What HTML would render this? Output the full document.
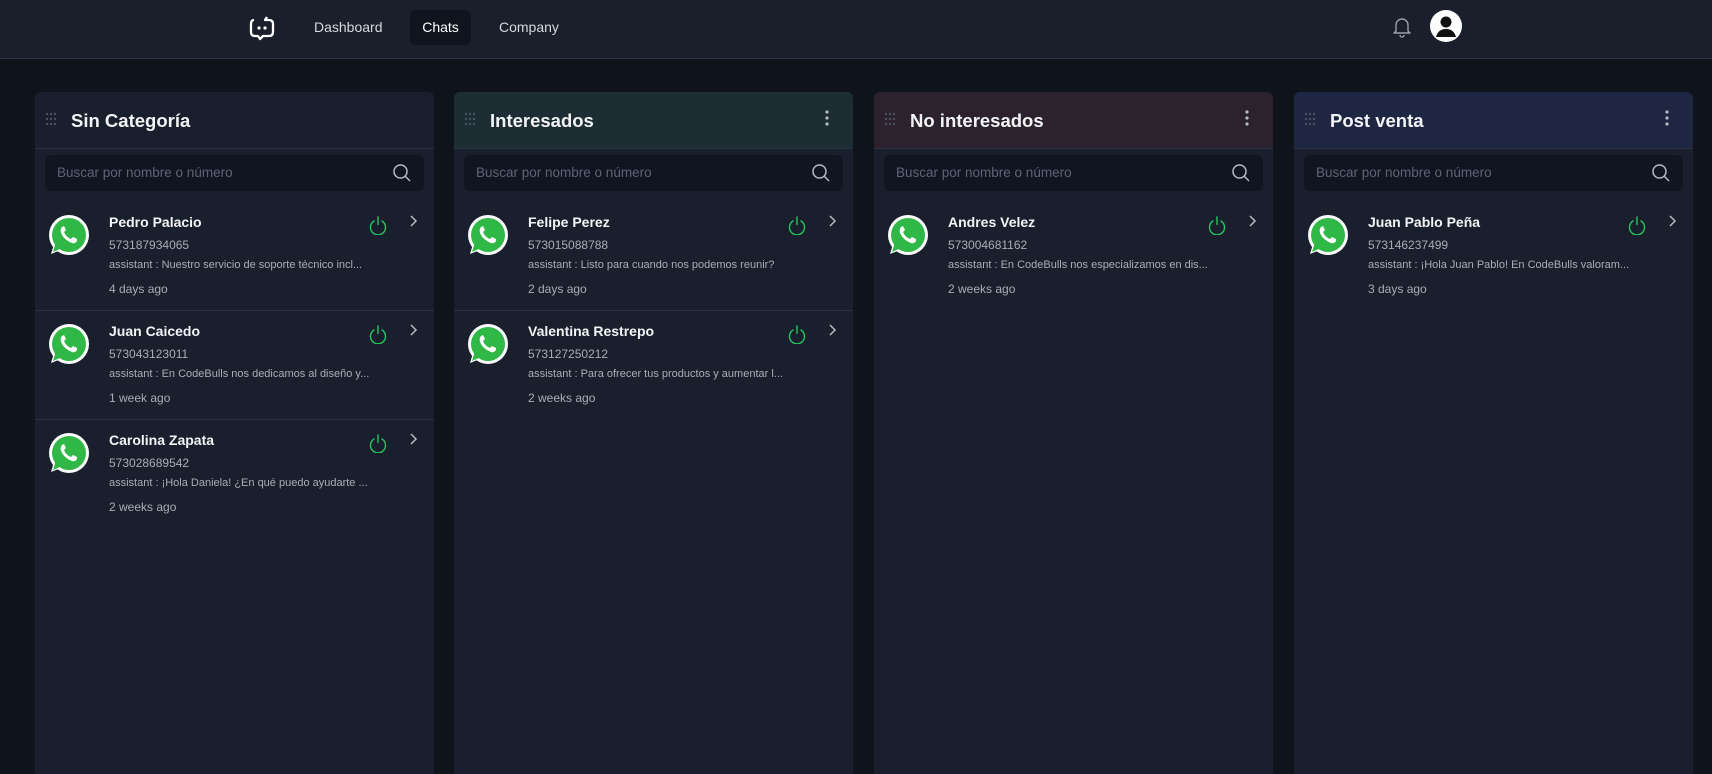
<!DOCTYPE html>
<html><head><meta charset="utf-8"><style>
*{box-sizing:border-box;margin:0;padding:0}
html,body{width:1712px;height:774px;overflow:hidden}
body{background:#0f131c;font-family:"Liberation Sans",sans-serif;color:#fff;position:relative}
.top{position:absolute;left:0;top:0;width:1712px;height:59px;background:#1a1f2b;border-bottom:1px solid #2c3240}
.nav{position:absolute;top:10px;height:35px;line-height:35px;font-size:14px;color:#d6d9de}
.col{position:absolute;top:92px;width:399px;height:682px;background:#1a1f2d;border-radius:6px 6px 0 0;overflow:hidden}
.hd{height:57px;border-bottom:1px solid #2c3342;position:relative}
.hd .t{position:absolute;left:36px;top:18px;font-size:18.5px;font-weight:bold;color:#f3f4f6}
.grip{position:absolute;left:10px;top:20px}
.dots{position:absolute;right:24px;top:18px}
.search{position:absolute;left:10px;top:63px;right:10px;height:36px;background:#111522;border-radius:6px;font-size:13.5px;color:#5d6475;line-height:36px;padding-left:12px}
.search svg{position:absolute;right:12px;top:8px}
.item{position:absolute;left:0;width:399px;height:109px;border-bottom:1px solid #2c3342}
.wa{position:absolute;left:12px;top:12px}
.nm{position:absolute;left:74px;top:12px;font-size:14px;font-weight:bold;color:#f3f4f6}
.ph{position:absolute;left:74px;top:36px;font-size:12px;color:#a8adb7}
.ms{position:absolute;left:74px;top:57px;font-size:11px;color:#a8adb7;white-space:nowrap}
.tm{position:absolute;left:74px;top:80px;font-size:12px;color:#a8adb7}
.pw{position:absolute;left:333px;top:13px}
.ch{position:absolute;left:374px;top:12px}
</style></head><body>
<div class="top">
<svg style="position:absolute;left:248px;top:14px" width="28" height="28" viewBox="0 0 28 28"><path d="M6 6 Q3 6 3 10 V18 Q3 22 7 22 H10 L12 25 L15 22 H21 Q25 22 25 18 V10 Q25 6 21 6 H17 L19 3" fill="none" stroke="#fff" stroke-width="2.3" stroke-linejoin="round"/><circle cx="11" cy="14" r="1.6" fill="#fff"/><circle cx="17" cy="14" r="1.6" fill="#fff"/></svg>
<div class="nav" style="left:314px">Dashboard</div>
<div class="nav" style="left:410px;width:61px;background:#10141e;border-radius:6px;text-align:center;color:#fff">Chats</div>
<div class="nav" style="left:499px">Company</div>
<svg style="position:absolute;left:1392px;top:16px" width="20" height="22" viewBox="0 0 20 22"><path d="M4 15 V9 A6 6 0 0 1 16 9 V15 L18 17 H2 Z M8 19 A2 2 0 0 0 12 19" fill="none" stroke="#9aa0ab" stroke-width="1.4" stroke-linejoin="round"/></svg>
<svg style="position:absolute;left:1430px;top:10px" width="32" height="32" viewBox="0 0 32 32"><circle cx="16" cy="16" r="16" fill="#fff"/><circle cx="16" cy="12" r="5.5" fill="#111"/><path d="M6 27 Q8 19 16 19 Q24 19 26 27 Z" fill="#111"/></svg>
</div>

<svg width="0" height="0" style="position:absolute"><defs>
<g id="wa"><circle cx="22" cy="21" r="20" fill="#fff"/><path d="M4 40 L7 30 A18 18 0 1 1 14 36 Z" fill="#fff"/><circle cx="22" cy="21" r="17" fill="#2fb845"/><path d="M6 38 L8.5 30 L14 34.5 Z" fill="#2fb845"/><path d="M15 13 Q13 15 14 19 Q17 26 25 29 Q28 30 30 27 L30 25 L26 23 L24 25 Q19 23 17 18 L19 16 L17 12 Z" fill="#fff"/></g>
<g id="pw"><path d="M6 6 A7.5 7.5 0 1 0 14 6" fill="none" stroke="#22c55e" stroke-width="1.4" stroke-linecap="round"/><path d="M10 2 V9.5" stroke="#22c55e" stroke-width="1.4" stroke-linecap="round"/></g>
<g id="gr" fill="#4a5162"><circle cx="2" cy="2" r="1.2"/><circle cx="6" cy="2" r="1.2"/><circle cx="10" cy="2" r="1.2"/><circle cx="2" cy="7" r="1.2"/><circle cx="6" cy="7" r="1.2"/><circle cx="10" cy="7" r="1.2"/><circle cx="2" cy="12" r="1.2"/><circle cx="6" cy="12" r="1.2"/><circle cx="10" cy="12" r="1.2"/></g>
</defs></svg>

<div class="col" style="left:35px">
<div class="hd"><svg class="grip" width="12" height="14"><use href="#gr"/></svg><div class="t">Sin Categoría</div></div>
<div class="search">Buscar por nombre o número<svg width="20" height="20" viewBox="0 0 20 20"><circle cx="8.5" cy="8.5" r="6.5" fill="none" stroke="#b5bac3" stroke-width="1.5"/><path d="M13.5 13.5 L18 18" stroke="#b5bac3" stroke-width="1.5"/></svg></div>
<div class="item" style="top:110px"><svg class="wa" width="44" height="44"><use href="#wa"/></svg><div class="nm">Pedro Palacio</div><div class="ph">573187934065</div><div class="ms">assistant : Nuestro servicio de soporte técnico incl...</div><div class="tm">4 days ago</div><svg class="pw" width="20" height="20"><use href="#pw"/></svg><svg class="ch" width="10" height="14"><path d="M2 2 L7 7 L2 12" fill="none" stroke="#b5bac3" stroke-width="1.5"/></svg></div>
<div class="item" style="top:219px"><svg class="wa" width="44" height="44"><use href="#wa"/></svg><div class="nm">Juan Caicedo</div><div class="ph">573043123011</div><div class="ms">assistant : En CodeBulls nos dedicamos al diseño y...</div><div class="tm">1 week ago</div><svg class="pw" width="20" height="20"><use href="#pw"/></svg><svg class="ch" width="10" height="14"><path d="M2 2 L7 7 L2 12" fill="none" stroke="#b5bac3" stroke-width="1.5"/></svg></div>
<div class="item" style="top:328px;border:none"><svg class="wa" width="44" height="44"><use href="#wa"/></svg><div class="nm">Carolina Zapata</div><div class="ph">573028689542</div><div class="ms">assistant : ¡Hola Daniela! ¿En qué puedo ayudarte ...</div><div class="tm">2 weeks ago</div><svg class="pw" width="20" height="20"><use href="#pw"/></svg><svg class="ch" width="10" height="14"><path d="M2 2 L7 7 L2 12" fill="none" stroke="#b5bac3" stroke-width="1.5"/></svg></div>
</div>

<div class="col" style="left:454px">
<div class="hd" style="background:#1c2d33"><svg class="grip" width="12" height="14"><use href="#gr"/></svg><div class="t">Interesados</div><svg class="dots" width="4" height="16"><circle cx="2" cy="2" r="1.6" fill="#b5bac3"/><circle cx="2" cy="8" r="1.6" fill="#b5bac3"/><circle cx="2" cy="14" r="1.6" fill="#b5bac3"/></svg></div>
<div class="search">Buscar por nombre o número<svg width="20" height="20" viewBox="0 0 20 20"><circle cx="8.5" cy="8.5" r="6.5" fill="none" stroke="#b5bac3" stroke-width="1.5"/><path d="M13.5 13.5 L18 18" stroke="#b5bac3" stroke-width="1.5"/></svg></div>
<div class="item" style="top:110px"><svg class="wa" width="44" height="44"><use href="#wa"/></svg><div class="nm">Felipe Perez</div><div class="ph">573015088788</div><div class="ms">assistant : Listo para cuando nos podemos reunir?</div><div class="tm">2 days ago</div><svg class="pw" width="20" height="20"><use href="#pw"/></svg><svg class="ch" width="10" height="14"><path d="M2 2 L7 7 L2 12" fill="none" stroke="#b5bac3" stroke-width="1.5"/></svg></div>
<div class="item" style="top:219px;border:none"><svg class="wa" width="44" height="44"><use href="#wa"/></svg><div class="nm">Valentina Restrepo</div><div class="ph">573127250212</div><div class="ms">assistant : Para ofrecer tus productos y aumentar l...</div><div class="tm">2 weeks ago</div><svg class="pw" width="20" height="20"><use href="#pw"/></svg><svg class="ch" width="10" height="14"><path d="M2 2 L7 7 L2 12" fill="none" stroke="#b5bac3" stroke-width="1.5"/></svg></div>
</div>

<div class="col" style="left:874px">
<div class="hd" style="background:#2c222d"><svg class="grip" width="12" height="14"><use href="#gr"/></svg><div class="t">No interesados</div><svg class="dots" width="4" height="16"><circle cx="2" cy="2" r="1.6" fill="#b5bac3"/><circle cx="2" cy="8" r="1.6" fill="#b5bac3"/><circle cx="2" cy="14" r="1.6" fill="#b5bac3"/></svg></div>
<div class="search">Buscar por nombre o número<svg width="20" height="20" viewBox="0 0 20 20"><circle cx="8.5" cy="8.5" r="6.5" fill="none" stroke="#b5bac3" stroke-width="1.5"/><path d="M13.5 13.5 L18 18" stroke="#b5bac3" stroke-width="1.5"/></svg></div>
<div class="item" style="top:110px;border:none"><svg class="wa" width="44" height="44"><use href="#wa"/></svg><div class="nm">Andres Velez</div><div class="ph">573004681162</div><div class="ms">assistant : En CodeBulls nos especializamos en dis...</div><div class="tm">2 weeks ago</div><svg class="pw" width="20" height="20"><use href="#pw"/></svg><svg class="ch" width="10" height="14"><path d="M2 2 L7 7 L2 12" fill="none" stroke="#b5bac3" stroke-width="1.5"/></svg></div>
</div>

<div class="col" style="left:1294px">
<div class="hd" style="background:#1e2642"><svg class="grip" width="12" height="14"><use href="#gr"/></svg><div class="t">Post venta</div><svg class="dots" width="4" height="16"><circle cx="2" cy="2" r="1.6" fill="#b5bac3"/><circle cx="2" cy="8" r="1.6" fill="#b5bac3"/><circle cx="2" cy="14" r="1.6" fill="#b5bac3"/></svg></div>
<div class="search">Buscar por nombre o número<svg width="20" height="20" viewBox="0 0 20 20"><circle cx="8.5" cy="8.5" r="6.5" fill="none" stroke="#b5bac3" stroke-width="1.5"/><path d="M13.5 13.5 L18 18" stroke="#b5bac3" stroke-width="1.5"/></svg></div>
<div class="item" style="top:110px;border:none"><svg class="wa" width="44" height="44"><use href="#wa"/></svg><div class="nm">Juan Pablo Peña</div><div class="ph">573146237499</div><div class="ms">assistant : ¡Hola Juan Pablo! En CodeBulls valoram...</div><div class="tm">3 days ago</div><svg class="pw" width="20" height="20"><use href="#pw"/></svg><svg class="ch" width="10" height="14"><path d="M2 2 L7 7 L2 12" fill="none" stroke="#b5bac3" stroke-width="1.5"/></svg></div>
</div>
</body></html>
